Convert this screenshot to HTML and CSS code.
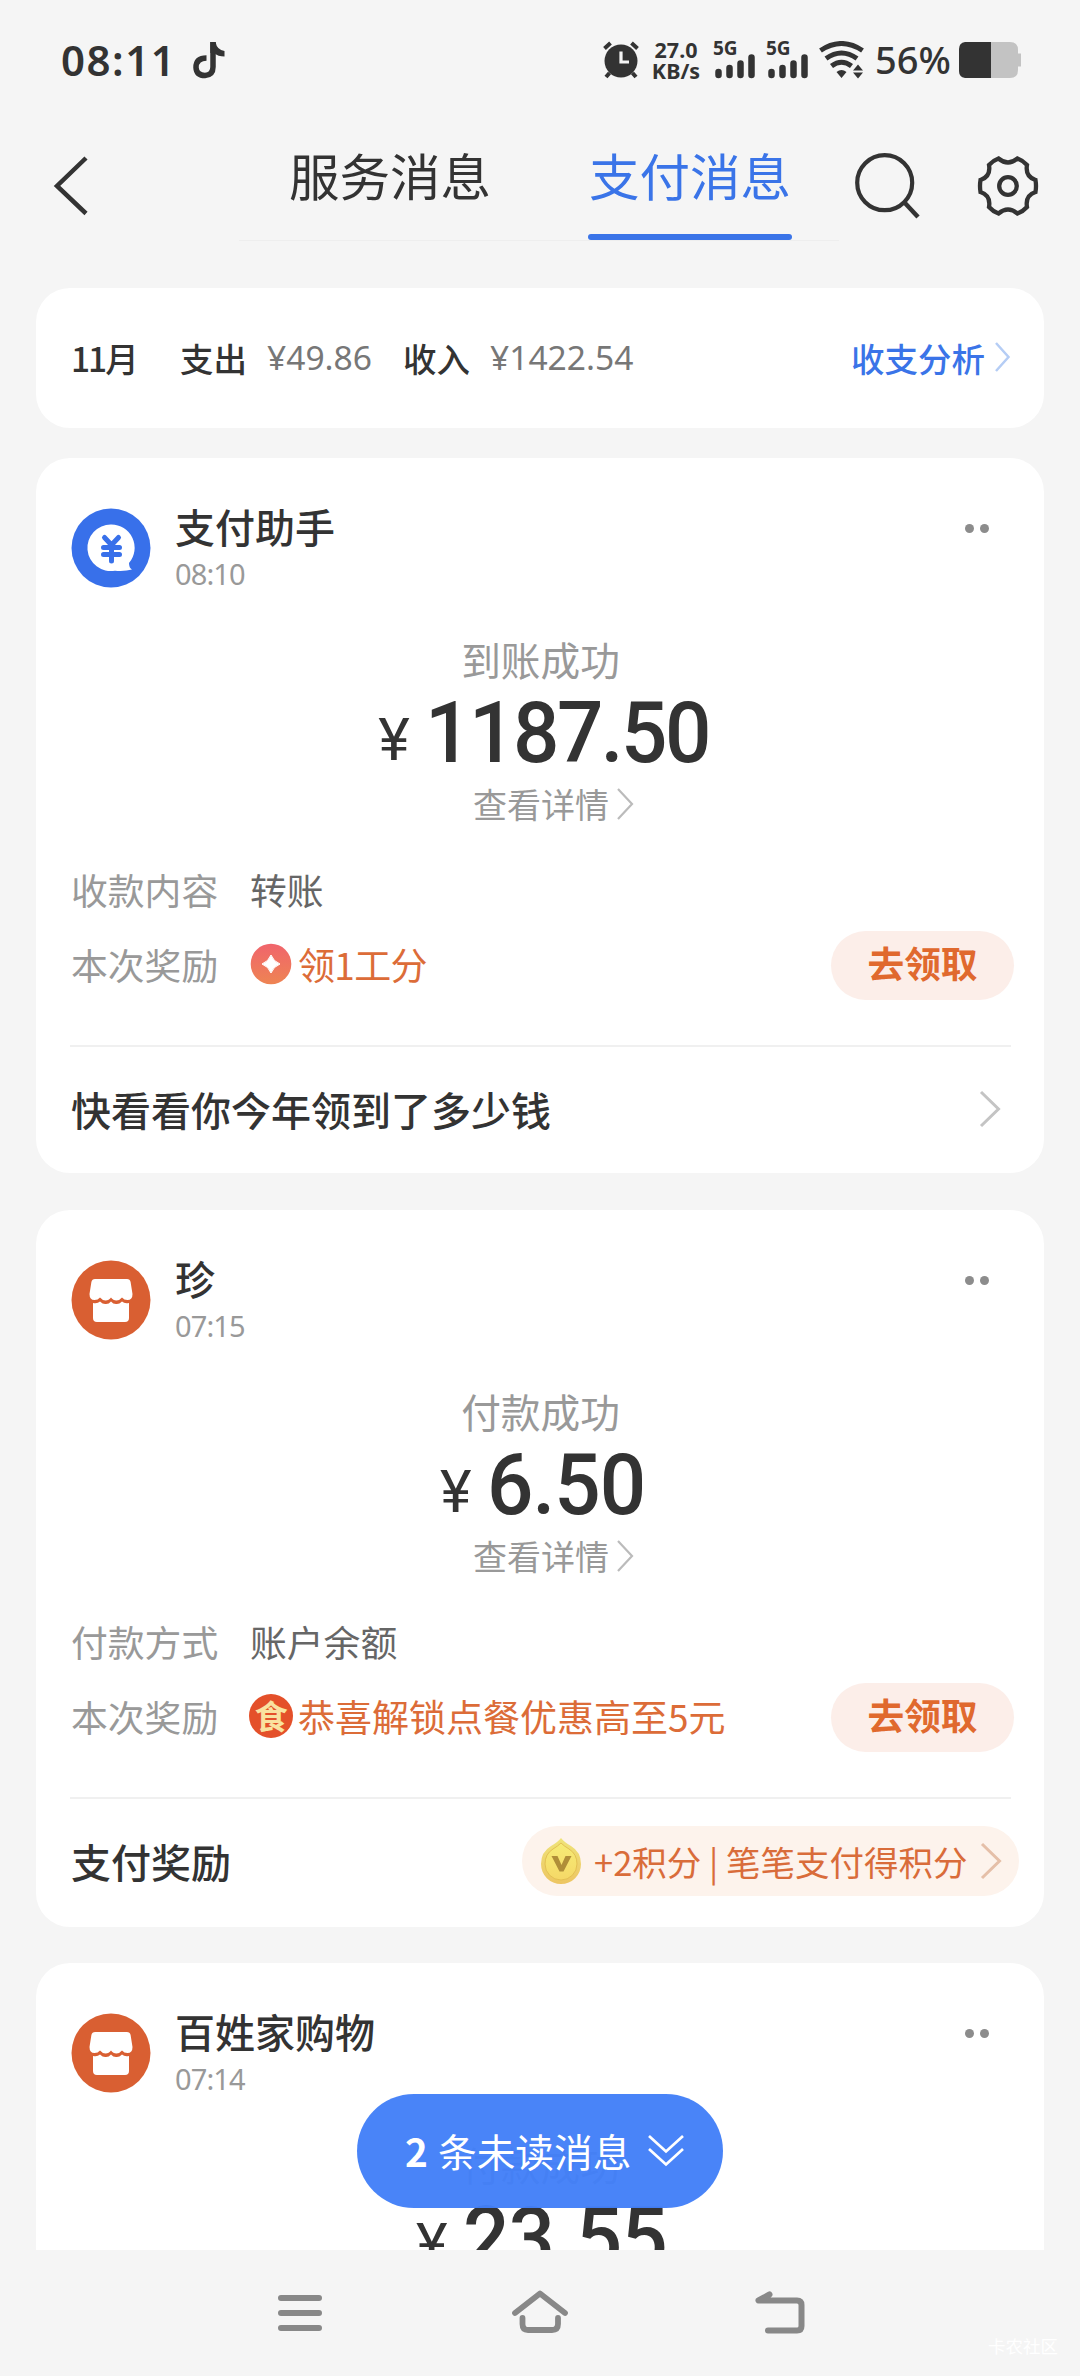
FILE: index.html
```html
<!DOCTYPE html>
<html lang="zh-CN">
<head>
<meta charset="utf-8">
<title>支付消息</title>
<link rel="stylesheet" href="styles.css">
</head>
<body>
<svg class="defs" width="0" height="0" aria-hidden="true">
  <defs>
    <linearGradient id="coral" x1="0" y1="0" x2="0" y2="1"><stop offset="0" stop-color="#f0646c"/><stop offset="1" stop-color="#ee8453"/></linearGradient>
    <linearGradient id="gold" x1="0" y1="0" x2="0" y2="1"><stop offset="0" stop-color="#efe47a"/><stop offset="1" stop-color="#edc562"/></linearGradient>
    <linearGradient id="gold-face" x1="0" y1="0" x2="0" y2="1"><stop offset="0" stop-color="#f6ec76"/><stop offset="1" stop-color="#f5d867"/></linearGradient>
    <symbol id="store" viewBox="0 0 80 80">
      <circle cx="40" cy="40" r="39.5" fill="#d95f32"/>
      <path d="M24 19H56Q59 19 59.600 22L61.500 34Q61.500 40 56.500 40Q53 40 51 37.500Q48.500 40.500 45.500 40.500Q42 40.500 40 37.500Q38 40.500 34.500 40.500Q31.500 40.500 29 37.500Q27 40 23.500 40Q18.500 40 18.500 34L20.400 22Q21 19 24 19Z" fill="#fff"/>
      <path d="M22 43Q26.500 44 29 41.500Q32 44.500 35 44Q38 44 40 41.500Q42 44 45 44Q48 44.500 51 41.500Q53.500 44 58 43V58Q58 62 54 62H26Q22 62 22 58Z" fill="#fff"/>
    </symbol>
  </defs>
</svg>
<div class="screen">
  <header class="status">
    <span class="clock">08:11</span>
    <svg class="note" width="32" height="38" viewBox="0 0 32 38"><path d="M13.500 17Q3 17 3 26.500Q3.500 34.500 12 34.500Q20 34 20 26V1" fill="none" stroke="#333" stroke-width="5.500"/><path d="M17.300 1H22.500Q24 9 31.500 10V15.500Q25 15.500 21 12H17.300Z" fill="#333"/></svg>
    <span class="spacer"></span>
    <svg class="alarm" width="38" height="40" viewBox="0 0 38 40"><circle cx="19" cy="21" r="16.500" fill="#333"/><path d="M2.500 8.500 8.500 3M35.500 8.500 29.500 3M7.500 33 4 37M30.500 33 34 37" stroke="#333" stroke-width="4"/><path d="M19 11.500V22H27" fill="none" stroke="#f5f5f5" stroke-width="3.200"/></svg>
    <span class="speed"><b>27.0</b><b>KB/s</b></span>
    <span class="signal"><b>5G</b><svg width="42" height="26" viewBox="0 0 42 26"><path d="M4.500 19v3M15.500 15v7M26.500 10.500v11.500M37.500 4.500v17.500" stroke="#333" stroke-width="6.500" stroke-linecap="round"/></svg></span>
    <span class="signal"><b>5G</b><svg width="42" height="26" viewBox="0 0 42 26"><path d="M4.500 19v3M15.500 15v7M26.500 10.500v11.500M37.500 4.500v17.500" stroke="#333" stroke-width="6.500" stroke-linecap="round"/></svg></span>
    <svg class="wifi" width="45" height="38" viewBox="0 0 45 38"><path d="M1.500 9.500Q22.500-4.500 43.500 9.500M7 17.500Q22.500 6.500 38 17.500M12.500 25Q22.500 17.500 32.500 25" fill="none" stroke="#333" stroke-width="5"/><path d="M22.500 37 17.500 31Q22.500 27 27.500 31ZM39 23.500 44 29.500H34ZM39 37.500 44 31.500H34Z" fill="#333"/></svg>
    <span class="percent">56%</span>
    <svg class="battery" width="64" height="38" viewBox="0 0 64 38"><path d="M33 1H52Q60 1 60 9V12.500H63V25.500H60V29Q60 37 52 37H33Z" fill="#c3c3c3"/><path d="M33 1H7Q1 2 1 8V30Q1 36 7 37H33Z" fill="#333"/></svg>
  </header>

  <nav class="tabs">
    <svg class="back" width="36" height="60" viewBox="0 0 36 60"><path d="M33 2 4 30 33 57.500" fill="none" stroke="#333" stroke-width="4.500"/></svg>
    <div class="tab-list">
      <span class="tab">服务消息</span>
      <span class="tab tab-active">支付消息</span>
    </div>
    <svg class="search" width="66" height="68" viewBox="0 0 66 68"><circle cx="30.700" cy="30.700" r="27.500" fill="none" stroke="#333" stroke-width="4.200"/><path d="M50 50 64 65" stroke="#333" stroke-width="4.500"/></svg>
    <svg class="gear" width="62" height="64" viewBox="0 0 62 64"><path d="M21.500 4.500Q31 12.500 40.500 4.500Q46 6.500 50 11Q48 22.500 58.500 26Q59.500 32 58.500 38Q48 41.500 50 53Q46 57.500 40.500 59.500Q31 51.500 21.500 59.500Q16 57.500 12 53Q14 41.500 3.500 38Q2.500 32 3.500 26Q14 22.500 12 11Q16 6.500 21.500 4.500Z" fill="none" stroke="#333" stroke-width="4.300"/><circle cx="31" cy="32" r="8.800" fill="none" stroke="#333" stroke-width="4.300"/></svg>
  </nav>

  <main class="feed">
    <section class="card summary">
      <b class="month">11月</b>
      <b>支出</b><span class="sum out">¥49.86</span>
      <b>收入</b><span class="sum">¥1422.54</span>
      <span class="spacer"></span>
      <b class="link">收支分析</b>
      <svg width="17" height="32" viewBox="0 0 17 32"><path d="M2 2 14.500 16 2 30" fill="none" stroke="#b5cdf5" stroke-width="2.500"/></svg>
    </section>

    <section class="card message">
      <div class="head">
        <svg class="avatar" viewBox="0 0 80 80"><circle cx="40" cy="40" r="39.500" fill="#3870ea"/><path d="M40 16.500A23.300 23.300 0 1 0 44 62.700Q54 63.500 61 61.500Q58 60 58 55A23.300 23.300 0 0 0 40 16.500Z" fill="#fff"/><path d="M33.500 29.500 40.500 37 47.500 29.500M40.500 38V53M32.500 39.500H48.500M32.500 46.500H48.500" fill="none" stroke="#3870ea" stroke-width="5" stroke-linecap="round"/></svg>
        <div class="who"><h2>支付助手</h2><time>08:10</time></div>
        <span class="more"><i></i><i></i></span>
      </div>
      <div class="result">
        <p class="state">到账成功</p>
        <p class="amount"><span class="yen">¥</span><span class="num num-long">1187.50</span></p>
        <p class="detail">查看详情<svg width="18" height="34" viewBox="0 0 18 34"><path d="M2 2 16 17 2 32" fill="none" stroke="#bbb" stroke-width="2.200"/></svg></p>
      </div>
      <div class="row"><span class="label">收款内容</span><span class="value">转账</span></div>
      <div class="row reward"><span class="label">本次奖励</span>
        <svg class="badge" viewBox="0 0 44 44"><circle cx="22" cy="22" r="20.300" fill="url(#coral)"/><path d="M22 13Q24.500 19.500 31 22Q24.500 24.500 22 31Q19.500 24.500 13 22Q19.500 19.500 22 13Z" fill="#fff" stroke="#fff"/></svg>
        <span class="promo short">领1工分</span><span class="spacer"></span><span class="claim">去领取</span></div>
      <div class="foot"><b>快看看你今年领到了多少钱</b><svg class="go" width="24" height="40" viewBox="0 0 24 40"><path d="M3 3 20.500 20 3 37" fill="none" stroke="#c4c4c4" stroke-width="3"/></svg></div>
    </section>

    <section class="card message tall">
      <div class="head">
        <svg class="avatar"><use href="#store"/></svg>
        <div class="who"><h2>珍</h2><time>07:15</time></div>
        <span class="more"><i></i><i></i></span>
      </div>
      <div class="result">
        <p class="state">付款成功</p>
        <p class="amount"><span class="yen">¥</span><span class="num">6.50</span></p>
        <p class="detail">查看详情<svg width="18" height="34" viewBox="0 0 18 34"><path d="M2 2 16 17 2 32" fill="none" stroke="#bbb" stroke-width="2.200"/></svg></p>
      </div>
      <div class="row"><span class="label">付款方式</span><span class="value">账户余额</span></div>
      <div class="row reward"><span class="label">本次奖励</span>
        <span class="badge food">食</span>
        <span class="promo">恭喜解锁点餐优惠高至5元</span><span class="spacer"></span><span class="claim">去领取</span></div>
      <div class="foot"><b>支付奖励</b>
        <span class="points"><svg width="42" height="48" viewBox="0 0 42 48"><path d="M21 1Q24 5 31 9Q41 15 41 27A20 20 0 0 1 1 27Q1 15 11 9Q18 5 21 1Z" fill="url(#gold)"/><path d="M21 6Q24 9 29 12Q37 17 37 27A16 16 0 0 1 5 27Q5 17 13 12Q18 9 21 6Z" fill="url(#gold-face)" stroke="#e3c052" stroke-width="1"/><path d="M11.500 19H17.500L21.500 28 25.500 19H31.500L23.500 34.500H19.500Z" fill="#b08e38"/></svg><span class="points-text">+2积分 | 笔笔支付得积分</span><svg class="go" width="24" height="40" viewBox="0 0 24 40"><path d="M3 3 20.500 20 3 37" fill="none" stroke="#e5bfa8" stroke-width="3"/></svg></span></div>
    </section>

    <section class="card message">
      <div class="head">
        <svg class="avatar"><use href="#store"/></svg>
        <div class="who"><h2>百姓家购物</h2><time>07:14</time></div>
        <span class="more"><i></i><i></i></span>
      </div>
      <div class="result">
        <p class="state">付款成功</p>
        <p class="amount"><span class="yen">¥</span><span class="num">23.55</span></p>
      </div>
    </section>
  </main>

  <div class="unread"><b>2</b><span>条未读消息</span><svg width="38" height="36" viewBox="0 0 38 36"><path d="M2 4 19 19.500 36 4M2 17 19 32.500 36 17" fill="none" stroke="#fff" stroke-width="2.700"/></svg></div>

  <footer class="system">
    <svg width="60" height="60" viewBox="0 0 60 60"><path d="M11 15H49M11 30H49M11 45H49" stroke="#888" stroke-width="6" stroke-linecap="round"/></svg>
    <svg width="60" height="60" viewBox="0 0 60 60"><path d="M5 30 30 10.500 55 30M12.500 35V41Q12.500 47 18 47H42Q48 47 48 41V35" fill="none" stroke="#888" stroke-width="5.800" stroke-linecap="round" stroke-linejoin="round"/></svg>
    <svg width="60" height="60" viewBox="0 0 60 60"><path d="M19.500 11.500 8.500 17.500H47Q51.500 17.500 51.500 22V43Q51.500 47.500 47 47.500H18" fill="none" stroke="#888" stroke-width="6" stroke-linecap="round" stroke-linejoin="round"/></svg>
    <span class="mark">卡农社区</span>
  </footer>
</div>
</body>
</html>
```

FILE: styles.css
```css
* { box-sizing: border-box; margin: 0; padding: 0; }
body { background: #f5f5f5; font-family: "Noto Sans CJK SC", sans-serif; color: #333; }
svg { display: block; flex: none; }
.defs { position: absolute; }
b { font-weight: 500; }
.spacer { flex: 1; }
.screen { width: 1080px; height: 2376px; position: relative; overflow: hidden; display: flex; flex-direction: column; }

.status { height: 120px; padding: 0 58px 0 61px; display: flex; align-items: center; font-family: "Noto Sans", sans-serif; white-space: nowrap; }
.clock { font-size: 42px; font-weight: 600; letter-spacing: 1.500px; width: 132px; padding-bottom: 2px; }
.speed { width: 46px; margin-left: 13px; display: flex; flex-direction: column; align-items: center; font-size: 21.500px; line-height: 21px; }
.speed b, .signal b { font-weight: 700; }
.signal { width: 42px; height: 38px; margin-left: 15px; display: flex; flex-direction: column; font-size: 19px; line-height: 15px; }
.signal b { margin-left: -1px; }
.signal svg { margin-top: -3px; }
.signal + .signal { margin-left: 11px; }
.wifi { margin-left: 10px; }
.percent { font-size: 38px; font-weight: 500; width: 74px; margin: 0 9px 0 11px; padding-bottom: 2px; }

.tabs { height: 168px; padding: 0 40px 48px 53px; display: flex; align-items: flex-start; }
.back { margin-top: 36px; }
.tab-list { margin: 30px 15px 0 150px; width: 600px; height: 91px; border-bottom: 1px solid #eee; display: flex; padding-left: 49px; gap: 96px; }
.tab { display: flex; flex-direction: column; justify-content: space-between; width: 204px; height: 90px; padding-left: 1px; font-size: 50.500px; line-height: 48px; white-space: nowrap; }
.tab-active { color: #3a74e8; }
.tab-active::after { content: ""; height: 6px; margin-left: -1px; border-radius: 3px; background: #3a74e8; }
.search { margin-top: 32px; }
.gear { margin: 34px 0 0 57px; }

.feed { height: 1962px; padding: 0 36px; overflow: hidden; }
.card { background: #fff; border-radius: 34px; }
.summary { height: 140px; padding: 0 33px 2px 35px; display: flex; align-items: center; font-size: 33.500px; white-space: nowrap; }
.month { width: 109px; letter-spacing: -2px; }
.sum { font-family: "Noto Sans", sans-serif; font-size: 33.600px; color: #777; margin-left: 20px; }
.out { width: 136px; }
.link { color: #3a74e8; margin-right: 9px; }

.message { margin-top: 30px; height: 715px; padding: 50px 30px 0 35px; }
.tall { margin-top: 37px; height: 717px; }
.tall + .message { margin-top: 36px; }
.head { height: 80px; display: flex; }
.avatar { width: 80px; height: 80px; }
.who { flex: 1; margin-left: 24px; }
.who h2 { font-size: 40px; font-weight: 500; line-height: 36px; }
.who time { display: block; font: 400 29px/30px "Noto Sans", sans-serif; letter-spacing: -.9px; color: #999; margin-top: 15px; }
.more { display: flex; gap: 6px; margin: 16px 25px 0 0; }
.more i { width: 9px; height: 9px; border-radius: 50%; background: #8c8c8c; }
.result { display: flex; flex-direction: column; align-items: center; color: #999; padding-right: 4px; }
.state { margin-top: 51px; font-size: 39.700px; line-height: 40px; }
.amount { height: 105px; display: flex; color: #333; font-family: Roboto, sans-serif; white-space: nowrap; padding-left: 4px; }
.yen { font-size: 60px; line-height: 122px; margin-right: 15px; }
.num { font-size: 86px; line-height: 108px; font-weight: 500; letter-spacing: -1px; margin-right: -8px; transform: scaleX(.95); transform-origin: 0 50%; }
.num-long { letter-spacing: -2.600px; margin-right: -17px; }
.detail { display: flex; align-items: center; font-size: 34px; line-height: 40px; gap: 7px; padding-left: 26px; }
.row { height: 75px; display: flex; align-items: center; font-size: 36.800px; white-space: nowrap; padding-bottom: 1px; }
.result + .row { margin-top: 28px; }
.label { width: 179px; color: #999; }
.value { color: #666; }
.badge { width: 44px; height: 44px; margin-left: -1px; }
.food { border-radius: 50%; background: #e4502a; color: #f9e2a0; font-size: 33px; font-weight: 700; line-height: 42px; text-align: center; }
.promo { color: #dc6c38; margin-left: 5px; font-size: 37px; }
.short { letter-spacing: -.7px; }
.claim { width: 183px; height: 69px; margin-top: 3px; border-radius: 35px; background: #fceee9; color: #e0692e; font-size: 36.700px; font-weight: 700; line-height: 63px; text-align: center; }
.foot { height: 126px; margin: 43px 0 0 -1px; padding-left: 1px; border-top: 2px solid #f0f0f0; display: flex; align-items: center; justify-content: space-between; font-size: 40px; width: 941px; }
.foot .go { margin-right: 9px; }
.foot b { padding-bottom: 1px; }
.points { width: 497px; height: 70px; margin-right: -8px; flex: none; border-radius: 35px; background: #fdf3ec; display: flex; align-items: center; padding-left: 18px; white-space: nowrap; }
.points-text { flex: 1; margin-left: 12px; font-size: 34.500px; line-height: 48px; color: #d96c3a; }
.points .go { margin-right: 16px; }

.unread { position: absolute; left: 357px; top: 2094px; width: 366px; height: 114px; border-radius: 57px; background: rgba(66, 127, 248, .96); color: #fff; display: flex; align-items: center; padding: 0 0 2px 48px; font-size: 38.700px; white-space: nowrap; }
.unread b { width: 33px; font-weight: 700; }
.unread span { width: 209px; }

.system { position: relative; height: 126px; padding: 33px 0 0 270px; display: flex; gap: 180px; }
.mark { position: absolute; right: 22px; bottom: 18px; font-size: 17.500px; line-height: 24px; color: #fff; }
```
